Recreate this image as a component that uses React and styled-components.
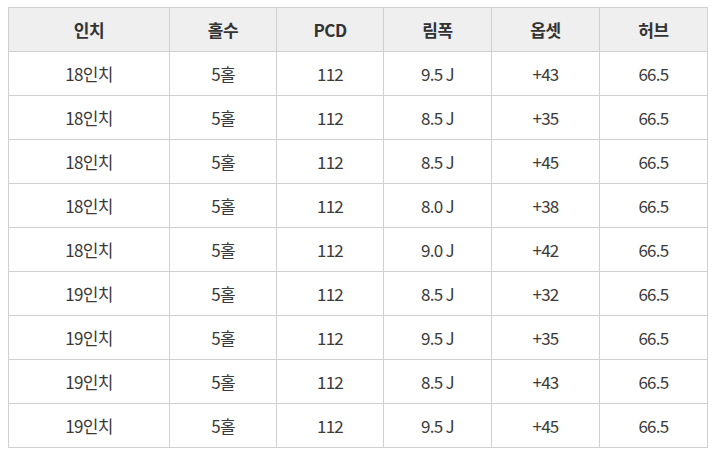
import React from "react";
import styled, { createGlobalStyle } from "styled-components";

const GlobalStyle = createGlobalStyle`
  body {
    margin: 0;
    background: #ffffff;
    font-family: "Noto Sans CJK KR", "Noto Sans", sans-serif;
  }
`;

const Wrapper = styled.div`
  padding: 7px 0 0 8px;
`;

const Table = styled.table`
  border-collapse: collapse;
  table-layout: fixed;
  width: 700px;
  border: 1px solid #d0d0d0;
`;

const Row = styled.tr`
  height: 44px;
`;

const HeadCell = styled.th`
  background: #efefef;
  border: 1px solid #d0d0d0;
  color: #333333;
  font-size: 17px;
  font-weight: 700;
  text-align: center;
  padding: 0;
  letter-spacing: -0.5px;
`;

const Cell = styled.td`
  border: 1px solid #d0d0d0;
  color: #3a3a3a;
  font-size: 17px;
  font-weight: 400;
  text-align: center;
  padding: 0;
  letter-spacing: -0.7px;
`;

const columns = [
  { label: "인치", width: 161 },
  { label: "홀수", width: 107 },
  { label: "PCD", width: 107 },
  { label: "림폭", width: 108 },
  { label: "옵셋", width: 108 },
  { label: "허브", width: 108 },
];

const rows = [
  ["18인치", "5홀", "112", "9.5 J", "+43", "66.5"],
  ["18인치", "5홀", "112", "8.5 J", "+35", "66.5"],
  ["18인치", "5홀", "112", "8.5 J", "+45", "66.5"],
  ["18인치", "5홀", "112", "8.0 J", "+38", "66.5"],
  ["18인치", "5홀", "112", "9.0 J", "+42", "66.5"],
  ["19인치", "5홀", "112", "8.5 J", "+32", "66.5"],
  ["19인치", "5홀", "112", "9.5 J", "+35", "66.5"],
  ["19인치", "5홀", "112", "8.5 J", "+43", "66.5"],
  ["19인치", "5홀", "112", "9.5 J", "+45", "66.5"],
];

export default function App() {
  return (
    <Wrapper>
      <GlobalStyle />
      <Table>
        <colgroup>
          {columns.map((c) => (
            <col key={c.label} style={{ width: c.width }} />
          ))}
        </colgroup>
        <thead>
          <Row>
            {columns.map((c) => (
              <HeadCell key={c.label}>{c.label}</HeadCell>
            ))}
          </Row>
        </thead>
        <tbody>
          {rows.map((r, i) => (
            <Row key={i}>
              {r.map((v, j) => (
                <Cell key={j}>{v}</Cell>
              ))}
            </Row>
          ))}
        </tbody>
      </Table>
    </Wrapper>
  );
}
